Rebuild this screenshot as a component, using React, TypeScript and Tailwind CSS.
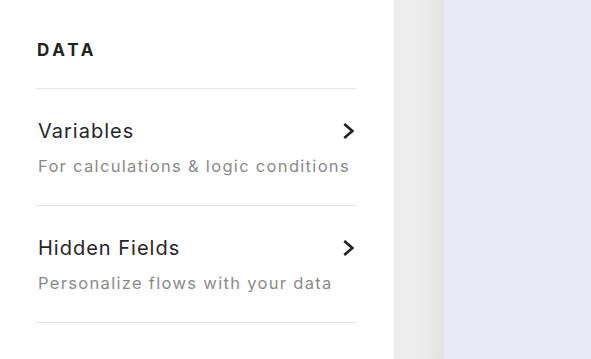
const items = [
  { title: "Variables", desc: "For calculations & logic conditions" },
  { title: "Hidden Fields", desc: "Personalize flows with your data" },
];

function Chevron() {
  return (
    <svg width="12" height="16" viewBox="0 0 12 16" fill="none" className="mr-[2px] text-[#222]">
      <path d="M2.2 1.8 L9.4 8 L2.2 14.2" stroke="currentColor" strokeWidth="2.6" strokeLinecap="square" strokeLinejoin="miter" />
    </svg>
  );
}

export default function App() {
  return (
    <div className="flex h-[359px] w-[591px] overflow-hidden font-['Inter',sans-serif]">
      <aside className="w-[394px] shrink-0 bg-white pl-9 pr-[37px] pt-[40px]">
        <h2 className="pl-px text-[17px] font-bold leading-[20px] tracking-[0.22em] text-[#222]">DATA</h2>
        <ul className="mt-[28px] border-t border-[#e6e6e6]">
          {items.map((item) => (
            <li key={item.title} className="border-b border-[#e6e6e6] pb-[28px] pl-[2px] pt-[28px]">
              <div className="flex h-[28px] items-center justify-between">
                <span className="text-[20px] leading-[28px] tracking-[0.05em] text-[#262626]">{item.title}</span>
                <Chevron />
              </div>
              <p className="mt-[10px] text-[16.5px] leading-[22px] tracking-[0.08em] text-[#8a8a8a]">{item.desc}</p>
            </li>
          ))}
        </ul>
      </aside>
      <div className="w-[50px] shrink-0 bg-gradient-to-r from-[#eeeeee] via-[#eeeeee] to-[#e2e2e2]" />
      <main className="flex-1 bg-[#e8e9f6]" />
    </div>
  );
}
